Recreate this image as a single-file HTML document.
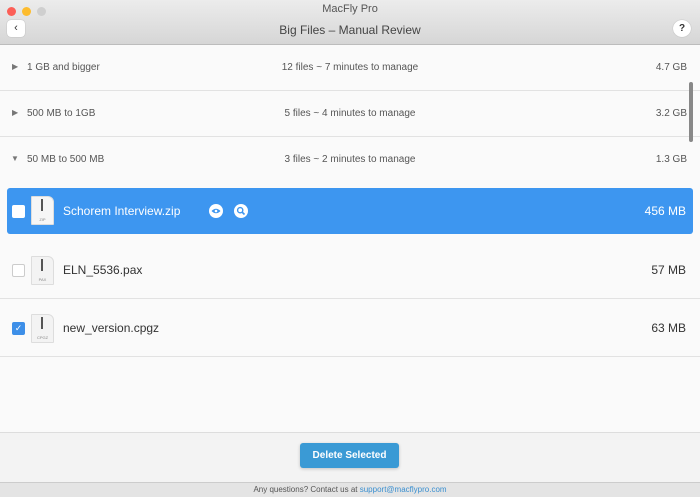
<!DOCTYPE html><html><head><style>
body{margin:0;width:700px;height:496px;overflow:hidden;font-family:"Liberation Sans",sans-serif;background:#fafafa;position:relative}
.tb{position:absolute;left:0;top:0;width:700px;height:44px;background:linear-gradient(#ececec,#d6d6d6);border-bottom:1px solid #bcbcbc}
.dot{position:absolute;top:7px;width:9px;height:9px;border-radius:50%}
.t1{position:absolute;top:3px;width:700px;text-align:center;font-size:11px;color:#555}
.t2{position:absolute;top:23px;width:700px;text-align:center;font-size:12px;color:#444}
.btn{position:absolute;top:20px;width:18px;height:17px;background:#fff;border-radius:4px;box-shadow:0 0 1px #999;font-size:11px;text-align:center;line-height:17px;color:#333}
.g{position:absolute;left:0;width:700px;border-bottom:1px solid #e2e2e2;font-size:10px;color:#555}
.g span{position:absolute}
.f{position:absolute;left:0;width:700px;font-size:12px;color:#333}
.ic{position:absolute;left:31px;width:21px;height:27px;background:#f3f3f3;border:1px solid #ddd;border-radius:1px 6px 1px 1px}
.ic:before{content:"";position:absolute;left:9px;top:2px;width:2px;height:12px;background:#555}
.ic i{position:absolute;bottom:2px;width:21px;text-align:center;font-size:4px;color:#888;font-style:normal}
.cb{position:absolute;left:12px;width:11px;height:11px;border:1px solid #ccc;border-radius:2px;background:#fff}
</style></head><body>
<div class="tb">
<div class="dot" style="left:7px;background:#fc5f57"></div>
<div class="dot" style="left:22px;background:#fdbc2e"></div>
<div class="dot" style="left:37px;background:#cfcfcf"></div>
<div class="t1">MacFly Pro</div>
<div class="t2">Big Files – Manual Review</div>
<div class="btn" style="left:7px">&#8249;</div>
<div class="btn" style="left:673px;border-radius:50%;font-weight:bold;font-size:10px">?</div>
</div>
<div class="g" style="top:45px;height:45px"><span style="left:12px;top:17px;font-size:8px;color:#777">▶</span><span style="left:27px;top:17px">1 GB and bigger</span><span style="left:0;width:700px;text-align:center;top:17px">12 files ~ 7 minutes to manage</span><span style="right:13px;top:17px">4.7 GB</span></div>
<div class="g" style="top:91px;height:45px"><span style="left:12px;top:17px;font-size:8px;color:#777">▶</span><span style="left:27px;top:17px">500 MB to 1GB</span><span style="left:0;width:700px;text-align:center;top:17px">5 files ~ 4 minutes to manage</span><span style="right:13px;top:17px">3.2 GB</span></div>
<div class="g" style="top:137px;height:45px;border:0"><span style="left:11px;top:17px;font-size:8px;color:#777">▼</span><span style="left:27px;top:17px">50 MB to 500 MB</span><span style="left:0;width:700px;text-align:center;top:17px">3 files ~ 2 minutes to manage</span><span style="right:13px;top:17px">1.3 GB</span></div>
<div style="position:absolute;left:689px;top:82px;width:4px;height:60px;background:#888;border-radius:3px"></div>
<div style="position:absolute;left:7px;top:188px;width:686px;height:46px;background:#3d96f0;border-radius:3px"></div>
<div class="f" style="top:188px;height:46px;color:#fff">
<div class="cb" style="top:17px;border-color:#fff"></div>
<div class="ic" style="top:8px;background:#f6f6f6"><i>ZIP</i></div>
<span style="position:absolute;left:63px;top:16px">Schorem Interview.zip</span>
<svg style="position:absolute;left:209px;top:16px" width="14" height="14" viewBox="0 0 14 14"><circle cx="7" cy="7" r="7" fill="#fff"/><path d="M2.5 7Q7 2.5 11.5 7Q7 11.5 2.5 7Z" fill="#3d96f0"/><circle cx="7" cy="7" r="1.3" fill="#fff"/></svg>
<svg style="position:absolute;left:234px;top:16px" width="14" height="14" viewBox="0 0 14 14"><circle cx="7" cy="7" r="7" fill="#fff"/><circle cx="6.2" cy="6.2" r="2.6" fill="none" stroke="#3d96f0" stroke-width="1.4"/><path d="M8 8L10.5 10.5" stroke="#3d96f0" stroke-width="1.6"/></svg>
<span style="position:absolute;right:14px;top:16px">456 MB</span></div>
<div class="f" style="top:240px;height:58px;border-bottom:1px solid #e2e2e2">
<div class="cb" style="top:24px"></div><div class="ic" style="top:16px"><i>PAX</i></div>
<span style="position:absolute;left:63px;top:23px">ELN_5536.pax</span><span style="position:absolute;right:14px;top:23px">57 MB</span></div>
<div class="f" style="top:299px;height:57px;border-bottom:1px solid #e2e2e2">
<div class="cb" style="top:23px;background:#3d8fe8;border-color:#3d8fe8;color:#fff;font-size:9px;text-align:center;line-height:11px">✓</div><div class="ic" style="top:15px"><i>CPGZ</i></div>
<span style="position:absolute;left:63px;top:22px">new_version.cpgz</span><span style="position:absolute;right:14px;top:22px">63 MB</span></div>
<div style="position:absolute;left:0;top:432px;width:700px;height:50px;background:#f3f3f3;border-top:1px solid #ddd"></div>
<div style="position:absolute;left:300px;top:443px;width:99px;height:25px;background:#3a9ad5;border-radius:3px;color:#fff;font-size:10px;font-weight:bold;text-align:center;line-height:25px;box-shadow:0 1px 3px rgba(0,0,0,.2)">Delete Selected</div>
<div style="position:absolute;left:0;top:482px;width:700px;height:14px;background:#e4e4e4;border-top:1px solid #ccc;font-size:8px;color:#555;text-align:center;line-height:13px">Any questions? Contact us at <span style="color:#3a8fd0">support@macflypro.com</span></div>
</body></html>
